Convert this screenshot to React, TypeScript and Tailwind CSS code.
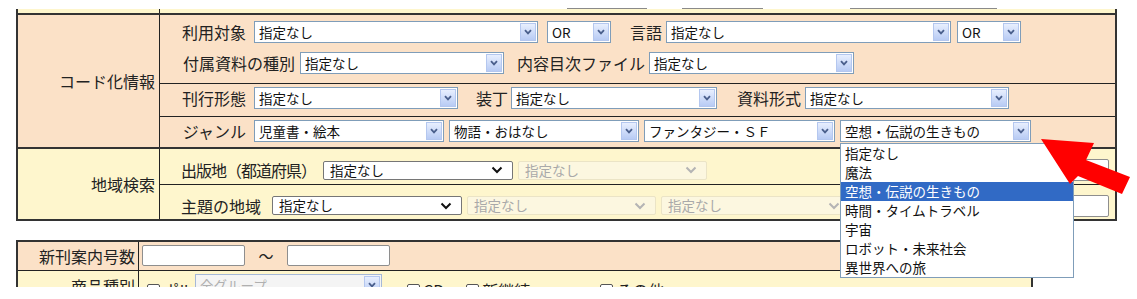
import React from "react";

const OldSelect = ({ w, value, disabled }: { w: string; value: string; disabled?: boolean }) => (
  <div
    className={`${w} h-[22px] shrink-0 flex items-center border ${
      disabled ? "bg-[#f4f4f4] border-[#a5b8d8]" : "bg-white border-[#7f9db9]"
    }`}
  >
    <span
      className={`flex-1 min-w-0 pl-[4px] text-[13.5px] leading-[18px] whitespace-nowrap ${
        disabled ? "text-[#b0b0b0]" : "text-[#111]"
      }`}
    >
      {value}
    </span>
    <span className="w-[16px] h-[18px] mr-[1px] shrink-0 flex items-center justify-center border border-[#b4c7ef] bg-linear-to-b from-[#e8effe] to-[#b8cbf4]">
      <svg width="8" height="6" viewBox="0 0 8 6">
        <path d="M1 1.2 L4 4.4 L7 1.2" fill="none" stroke="#4a5f8c" strokeWidth="1.8" />
      </svg>
    </span>
  </div>
);

const NewSelect = ({ w, value, disabled }: { w: string; value: string; disabled?: boolean }) => (
  <div
    className={`${w} h-[19px] shrink-0 flex items-center rounded-[2px] border ${
      disabled ? "border-[#ebe4c6] bg-[#fcf7e0]" : "border-[#767676] bg-white"
    }`}
  >
    <span
      className={`flex-1 min-w-0 pl-[6px] text-[13.5px] leading-[17px] whitespace-nowrap ${
        disabled ? "text-[#a9a9a9]" : "text-[#111]"
      }`}
    >
      {value}
    </span>
    <svg className="mr-[9px] shrink-0" width="12" height="8" viewBox="0 0 12 8">
      <path
        d="M1.5 1.5 L6 6 L10.5 1.5"
        fill="none"
        stroke={disabled ? "#b4b4b4" : "#111"}
        strokeWidth="2"
      />
    </svg>
  </div>
);

const Label = ({ w, children, className = "" }: { w: string; children: React.ReactNode; className?: string }) => (
  <span className={`${w} shrink-0 text-[16px] leading-[20px] text-[#222] whitespace-nowrap ${className}`}>{children}</span>
);

const Check = ({ label, className = "" }: { label: string; className?: string }) => (
  <span className={`flex items-center gap-[3px] shrink-0 ${className}`}>
    <span className="w-[13px] h-[13px] shrink-0 rounded-[2px] border border-[#555] bg-white" />
    <span className="text-[16px] leading-[20px] text-[#222] whitespace-nowrap">{label}</span>
  </span>
);

const options = ["指定なし", "魔法", "空想・伝説の生きもの", "時間・タイムトラベル", "宇宙", "ロボット・未来社会", "異世界への旅"];

export default function App() {
  return (
    <div className="relative w-[1137px] h-[299px] bg-white overflow-hidden font-['Noto_Sans_CJK_JP','Noto_Sans',sans-serif]">
      {/* tail of the previous row */}
      <div className="ml-[16px] w-[1101px]">
        <div className="h-[9px] flex">
          <div className="ml-[551px] w-[80px] h-[9px] border-b border-[#8a8a8a]" />
          <div className="ml-[35px] w-[81px] h-[9px] border-b border-[#8a8a8a]" />
          <div className="ml-[87px] w-[147px] h-[9px] border-b border-[#8a8a8a]" />
        </div>
        <div className="h-[4px] flex bg-[#fef6cd] border-x-2 border-[#333]">
          <div className="w-[142px] border-r border-[#222]" />
        </div>
      </div>

      {/* search conditions */}
      <div className="ml-[16px] w-[1101px] border-2 border-[#333]">
        {/* コード化情報 */}
        <div className="flex h-[134px] bg-[#fbe1c7] border-b-2 border-[#333]">
          <div className="w-[142px] shrink-0 border-r border-[#222] flex items-center justify-end pr-[4px]">
            <Label w="w-auto">コード化情報</Label>
          </div>
          <div className="flex-1 flex flex-col">
            <div className="h-[69px] border-b border-[#222] pt-[6px] flex flex-col gap-[9px]">
              <div className="flex items-center">
                <Label w="w-[94px]" className="text-right pr-[8px]">利用対象</Label>
                <OldSelect w="w-[284px]" value="指定なし" />
                <div className="w-[9px]" />
                <OldSelect w="w-[64px]" value="OR" />
                <Label w="w-[55px]" className="text-right pr-[4px]">言語</Label>
                <OldSelect w="w-[285px]" value="指定なし" />
                <div className="w-[6px]" />
                <OldSelect w="w-[64px]" value="OR" />
              </div>
              <div className="flex items-center">
                <Label w="w-[140px]" className="text-right pr-[5px]">付属資料の種別</Label>
                <OldSelect w="w-[204px]" value="指定なし" />
                <Label w="w-[145px]" className="text-right pr-[4px]">内容目次ファイル</Label>
                <OldSelect w="w-[205px]" value="指定なし" />
              </div>
            </div>
            <div className="h-[33px] border-b border-[#222] pt-[3px] flex items-start">
              <div className="flex items-center">
                <Label w="w-[94px]" className="text-right pr-[8px]">刊行形態</Label>
                <OldSelect w="w-[204px]" value="指定なし" />
                <Label w="w-[53px]" className="text-right pr-[3px]">装丁</Label>
                <OldSelect w="w-[206px]" value="指定なし" />
                <Label w="w-[88px]" className="text-right pr-[4px]">資料形式</Label>
                <OldSelect w="w-[204px]" value="指定なし" />
              </div>
            </div>
            <div className="flex-1 pt-[3px] flex items-start">
              <div className="flex items-center gap-[5px]">
                <Label w="w-[89px]" className="text-right pr-[3px]">ジャンル</Label>
                <OldSelect w="w-[190px]" value="児童書・絵本" />
                <OldSelect w="w-[190px]" value="物語・おはなし" />
                <OldSelect w="w-[191px]" value="ファンタジー・ＳＦ" />
                <OldSelect w="w-[191px]" value="空想・伝説の生きもの" />
              </div>
            </div>
          </div>
        </div>

        {/* 地域検索 */}
        <div className="flex h-[70px] bg-[#fef6cd]">
          <div className="w-[142px] shrink-0 border-r border-[#222] flex items-center justify-end pr-[4px]">
            <Label w="w-auto">地域検索</Label>
          </div>
          <div className="flex-1 flex flex-col">
            <div className="h-[36px] border-b border-[#222] pt-[7px] flex items-center justify-between pr-[6px]">
              <div className="flex items-center gap-[5px]">
                <Label w="w-[158px]" className="pl-[21px] tracking-[-1px]">出版地（都道府県）</Label>
                <NewSelect w="w-[190px]" value="指定なし" />
                <NewSelect w="w-[189px]" value="指定なし" disabled />
              </div>
              <div className="w-[240px] h-[22px] rounded-[2px] border border-[#8e8e8e] bg-white" />
            </div>
            <div className="flex-1 pt-[7px] flex items-center justify-between pr-[6px]">
              <div className="flex items-center gap-[5px]">
                <Label w="w-[107px]" className="pl-[21px]">主題の地域</Label>
                <NewSelect w="w-[190px]" value="指定なし" />
                <NewSelect w="w-[189px]" value="指定なし" disabled />
                <NewSelect w="w-[189px]" value="指定なし" disabled />
              </div>
              <div className="w-[240px] h-[22px] rounded-[2px] border border-[#8e8e8e] bg-white" />
            </div>
          </div>
        </div>
      </div>

      {/* 新刊案内 */}
      <div className="ml-[16px] mt-[19px] w-[1017px] h-[47px] border-x-2 border-t-2 border-[#333] overflow-hidden">
        <div className="flex h-[29px] bg-[#fbe1c7] border-b border-[#222]">
          <div className="w-[121px] shrink-0 border-r border-[#222] flex items-center justify-end pr-[3px]">
            <Label w="w-auto">新刊案内号数</Label>
          </div>
          <div className="flex items-start pt-[3px] pl-[3px]">
            <div className="w-[103px] h-[21px] rounded-[2px] border border-[#8e8e8e] bg-white" />
            <span className="w-[42px] text-center text-[15px] leading-[21px] text-[#222]">～</span>
            <div className="w-[103px] h-[21px] rounded-[2px] border border-[#8e8e8e] bg-white" />
          </div>
        </div>
        <div className="flex h-[40px] bg-[#fef6cd]">
          <div className="w-[121px] shrink-0 border-r border-[#222] flex items-start justify-end pr-[3px] pt-[5px]">
            <Label w="w-auto">商品種別</Label>
          </div>
          <div className="flex items-start pt-[3px]">
            <Check label="ポル" className="ml-[8px] mt-[6px] w-[48px] tracking-[-2px]" />
            <OldSelect w="w-[187px]" value="全グループ" disabled />
            <Check label="CD" className="ml-[25px] mt-[6px]" />
            <Check label="新継続" className="ml-[22px] mt-[6px]" />
            <Check label="その他" className="ml-[70px] mt-[6px]" />
          </div>
        </div>
      </div>

      {/* open dropdown list */}
      <div className="absolute left-[840px] top-[143px] w-[234px] bg-white border border-[#7f9db9]">
        {options.map((o, i) => (
          <div
            key={o}
            className={`h-[19px] px-[4px] text-[13.5px] leading-[19px] whitespace-nowrap ${
              i === 2 ? "bg-[#316ac5] text-white" : "text-[#111]"
            }`}
          >
            {o}
          </div>
        ))}
      </div>

      {/* red pointer arrow */}
      <svg className="absolute left-0 top-0 pointer-events-none" width="1137" height="299">
        <polygon
          points="1041,139 1094,143 1086,160 1130,177 1122,194 1078,176 1070,184"
          fill="#ff0000"
        />
      </svg>
    </div>
  );
}
